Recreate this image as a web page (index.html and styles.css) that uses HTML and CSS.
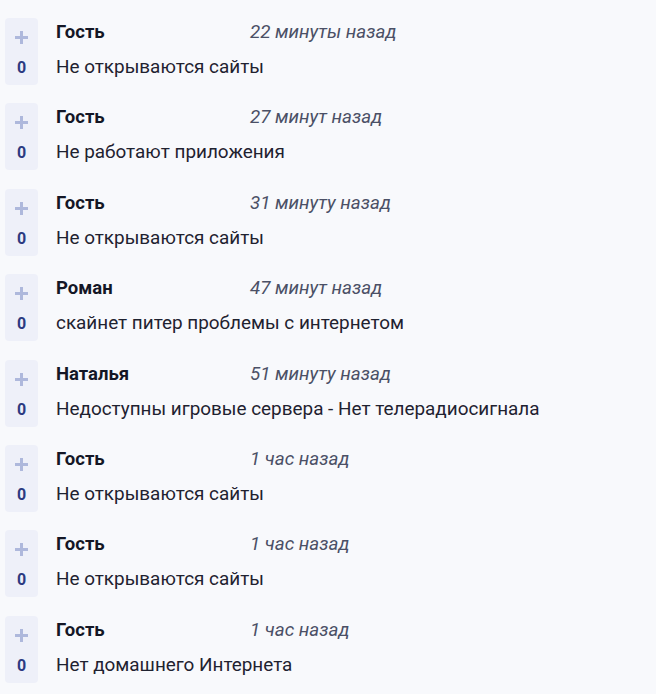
FILE: index.html
```html
<!DOCTYPE html>
<html lang="ru">
<head>
<meta charset="utf-8">
<link rel="stylesheet" href="styles.css">
</head>
<body>
<div class="list">
  <div class="item">
    <div class="vote"><span class="plus"></span><span class="count">0</span></div>
    <div class="content">
      <div class="head"><span class="name">Гость</span><span class="time">22 минуты назад</span></div>
      <div class="text">Не открываются сайты</div>
    </div>
  </div>
  <div class="item">
    <div class="vote"><span class="plus"></span><span class="count">0</span></div>
    <div class="content">
      <div class="head"><span class="name">Гость</span><span class="time">27 минут назад</span></div>
      <div class="text">Не работают приложения</div>
    </div>
  </div>
  <div class="item">
    <div class="vote"><span class="plus"></span><span class="count">0</span></div>
    <div class="content">
      <div class="head"><span class="name">Гость</span><span class="time">31 минуту назад</span></div>
      <div class="text">Не открываются сайты</div>
    </div>
  </div>
  <div class="item">
    <div class="vote"><span class="plus"></span><span class="count">0</span></div>
    <div class="content">
      <div class="head"><span class="name">Роман</span><span class="time">47 минут назад</span></div>
      <div class="text">скайнет питер проблемы с интернетом</div>
    </div>
  </div>
  <div class="item">
    <div class="vote"><span class="plus"></span><span class="count">0</span></div>
    <div class="content">
      <div class="head"><span class="name">Наталья</span><span class="time">51 минуту назад</span></div>
      <div class="text">Недоступны игровые сервера - Нет телерадиосигнала</div>
    </div>
  </div>
  <div class="item">
    <div class="vote"><span class="plus"></span><span class="count">0</span></div>
    <div class="content">
      <div class="head"><span class="name">Гость</span><span class="time">1 час назад</span></div>
      <div class="text">Не открываются сайты</div>
    </div>
  </div>
  <div class="item">
    <div class="vote"><span class="plus"></span><span class="count">0</span></div>
    <div class="content">
      <div class="head"><span class="name">Гость</span><span class="time">1 час назад</span></div>
      <div class="text">Не открываются сайты</div>
    </div>
  </div>
  <div class="item">
    <div class="vote"><span class="plus"></span><span class="count">0</span></div>
    <div class="content">
      <div class="head"><span class="name">Гость</span><span class="time">1 час назад</span></div>
      <div class="text">Нет домашнего Интернета</div>
    </div>
  </div>
</div>
</body>
</html>
```
FILE: styles.css
```css
html, body {
  margin: 0;
  padding: 0;
  background: #f8f9fc;
}
body {
  font-family: Roboto, "Noto Sans", sans-serif;
  color: #1f2230;
}
.list {
  display: flex;
  flex-direction: column;
  gap: 18.4px;
  padding: 18px 0 0 5px;
}
.item {
  display: flex;
  align-items: flex-start;
  gap: 18px;
}
.vote {
  width: 33px;
  height: 67px;
  background: #eef0f9;
  border-radius: 4px;
  display: flex;
  flex-direction: column;
  align-items: center;
  flex-shrink: 0;
}
.plus {
  position: relative;
  width: 13px;
  height: 13px;
  margin-top: 13px;
}
.plus::before, .plus::after {
  content: "";
  position: absolute;
  background: #aeb8dc;
}
.plus::before {
  left: 5px;
  top: 0;
  width: 3px;
  height: 13px;
}
.plus::after {
  left: 0;
  top: 5px;
  width: 13px;
  height: 3px;
}
.count {
  margin-top: 14px;
  font-size: 16px;
  font-weight: 700;
  color: #2c3a82;
  line-height: 20px;
}
.content {
  padding-top: 3px;
}
.head {
  display: flex;
  height: 22px;
  align-items: center;
}
.name {
  width: 194px;
  font-size: 18.5px;
  font-weight: 700;
  color: #141726;
}
.time {
  font-size: 18.8px;
  font-style: italic;
  color: #4b5066;
}
.text {
  margin-top: 13px;
  font-size: 18.9px;
  color: #1f2230;
  line-height: 22px;
}
```
